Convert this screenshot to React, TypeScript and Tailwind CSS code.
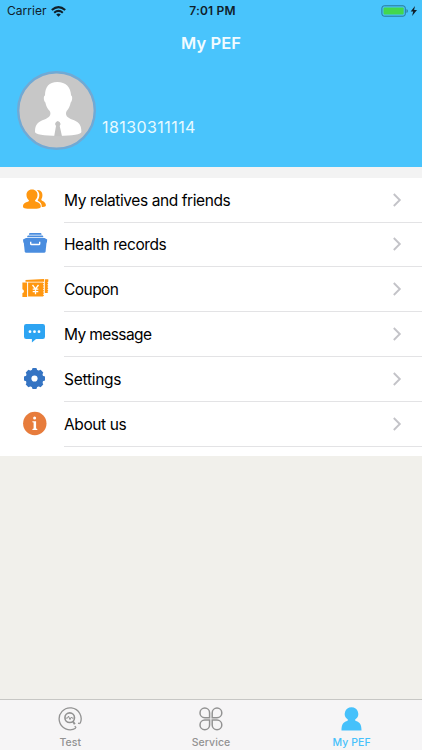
import type { ReactNode } from 'react';

const iconClass = 'ml-[21px] mt-px h-7 w-7 shrink-0';

const FriendsIcon = () => (
  <svg className={iconClass} viewBox="0 0 28 28" fill="#ff9710">
    <path d="M11 2.500C7.400 2.500 5.300 5 5.500 8.200c.1 2 .9 3.700 2.100 4.800.7.700.4 1.200-.4 1.500C4.200 15.700 2 16.500 2 19.400c0 1.600 1.500 2.400 9 2.400s8.800-.8 8.800-2.400c0-2.900-2.200-3.700-5-4.900-.8-.3-1.100-.8-.4-1.500 1.200-1.100 2-2.800 2.100-4.800C16.700 5 14.600 2.500 11 2.500z" />
    <path d="M15.800 3c5.200-.5 6.800 4.500 4.900 8.600-.6 1.100-.5 1.600.4 2.100 2.200 1 4 2.500 3.800 4.900-.1 1.100-1.200 1.400-4.100 1.300-.1-2.900-1.100-4.600-3.600-5.800-.7-.4-.6-.9 0-1.800 1.700-2.700 1.700-6.700-1.400-9.300z" />
  </svg>
);

const RecordsIcon = () => (
  <svg className={iconClass} viewBox="0 0 28 28" fill="#4a8ddf">
    <path d="M9 2.100h10.500q.8 0 1 .9v.8H8V3q.2-.9 1-.9zM7 4.500h14.500q.8 0 .9 1.800H6.100q.1-1.800.9-1.800zM2 8.500l3-1.600h18.500l2.700 1.600-.3 2.900H2.300z" />
    <path d="M2.700 11h22.900l-1 9.200q-.2 1.500-1.600 1.500H5.300q-1.400 0-1.600-1.500z" />
    <path d="M9.700 10.800v1.900q0 .8.800.8h7.400q.8 0 .8-.8v-1.900" fill="none" stroke="#fff" strokeWidth="1.400" />
  </svg>
);

const CouponIcon = () => (
  <svg className={iconClass} viewBox="0 0 28 28">
    <path d="M1.400 6.500h4.700V21H1.400v-3.800a2 2 0 0 0 0-3.900z" fill="#ff9710" />
    <path d="M4.500 5.700V4L23 3v2.700zM23.800 3.200h3.500v2.300l-1 1 1 1-1 1.200 1 1.200-1 1.200 1 1.200-1 1.200 1 1.200-1 1.200 1 1.200h-3.500z" fill="#ff9710" />
    <path d="M7.100 6.500h14.700l1.300 1L22 8.700l1.100 1.200-1.100 1.200 1.100 1.200-1.100 1.200 1.100 1.200-1.100 1.200 1.100 1.200-1.100 1.200 1.100 1.200-1.300 1H7.100z" fill="#ff9710" />
    <path d="m11.500 9 3 4 3-4M14.500 13v5.300M11.700 13.200h5.600M11.700 15.700h5.600" fill="none" stroke="#fff" strokeWidth="1.300" />
  </svg>
);

const MessageIcon = () => (
  <svg className={iconClass} viewBox="0 0 28 28">
    <path d="M5.200 3h16.600Q24 3 24 5.200v10.500q0 2.200-2.200 2.200H15l-4.100 3.500v-3.500H5.200Q3 17.900 3 15.700V5.200Q3 3 5.200 3z" fill="#2da4f2" />
    <g fill="#fff"><circle cx="9" cy="10.700" r="1.400" /><circle cx="13.500" cy="10.700" r="1.400" /><circle cx="18" cy="10.700" r="1.400" /></g>
  </svg>
);

const SettingsIcon = () => (
  <svg className={iconClass} viewBox="0 0 28 28">
    <g transform="translate(13.500 12.500)" fill="#3574c3">
      <circle r="8.900" />
      <path id="cog" d="M-2.800-8.200-1.900-10.500h3.800l.9 2.300V8.200l-.9 2.300h-3.800l-.9-2.300z" />
      <use href="#cog" transform="rotate(45)" />
      <use href="#cog" transform="rotate(90)" />
      <use href="#cog" transform="rotate(135)" />
      <circle r="3.100" fill="#fff" />
    </g>
  </svg>
);

const InfoIcon = () => (
  <svg className={iconClass} viewBox="0 0 28 28">
    <circle cx="13.800" cy="12.500" r="11.700" fill="#e77c3c" />
    <circle cx="13.600" cy="7" r="1.500" fill="#fff" />
    <path d="M11.400 10.300h3.700v7.300l1.200.4v.9h-4.900V18l1.200-.4v-6.100l-1.200-.3z" fill="#fff" />
  </svg>
);

const Row = ({ icon, label, tracking }: { icon: ReactNode; label: string; tracking: string }) => (
  <div className="flex h-[44.800px] items-center">
    {icon}
    <div className="ml-[15px] flex h-full flex-1 items-center justify-between border-b border-[#e3e3e5] pr-5">
      <span className={`pt-[2px] text-[15.500px] leading-5 text-black ${tracking}`}>{label}</span>
      <svg className="h-3.5 w-2.5" viewBox="0 0 10 14" fill="none" stroke="#c3c3c8" strokeWidth="1.900">
        <path d="m1.800 1 6 6-6 6" />
      </svg>
    </div>
  </div>
);

const Tab = ({ icon, label, active }: { icon: ReactNode; label: string; active?: boolean }) => (
  <div className={`flex flex-1 flex-col items-center pt-[7px] text-[10.500px] leading-3 font-medium tracking-[0.080px] ${active ? 'text-[#46c1fb]' : 'text-[#929292]'}`}>
    {icon}
    <span className="mt-[6px]">{label}</span>
  </div>
);

export default function App() {
  return (
    <div className="flex h-[750px] w-[422px] flex-col overflow-hidden bg-[#f1f0eb] font-['Inter','Liberation_Sans',sans-serif]">
      <header className="h-[167px] shrink-0 bg-[#49c4fc]">
        <div className="grid h-[22px] grid-cols-3 items-center pl-[7px] pr-[4px] text-[12px] text-[#10202a]">
          <div className="flex items-center gap-[5px]">
            <span className="tracking-[0.020px]">Carrier</span>
            <svg className="h-[11px] w-[15px]" viewBox="0 0 15 11" fill="none" stroke="#10202a" strokeWidth="2.100">
              <path d="M.8 4q6.700-5.700 13.400 0M3.200 6.700q4.300-3.500 8.600 0" />
              <path d="m5.200 8.400 2.300 2.300 2.300-2.300q-2.300-1.800-4.600 0z" fill="#10202a" stroke="none" />
            </svg>
          </div>
          <span className="text-center font-semibold tracking-[0.200px]">7:01 PM</span>
          <div className="flex items-center justify-end">
            <svg className="h-3 w-[37px]" viewBox="0 0 37 12">
              <rect x=".9" y=".8" width="23.400" height="10.400" rx="2.300" fill="none" stroke="#287995" />
              <rect x="2.500" y="2.400" width="20.200" height="7.200" rx="1" fill="#43d74d" />
              <path d="M25.500 4q1.300.6 1.300 2t-1.300 2z" fill="#287995" />
              <path d="m34 .9-4.300 5.700h2.500L31.100 11l4.900-6h-2.900z" fill="#10202a" />
            </svg>
          </div>
        </div>
        <h1 className="h-[42px] text-center text-[16.500px] leading-[42px] font-semibold tracking-[0.100px] text-[#f2fbff]">My PEF</h1>
        <div className="flex pl-[17px] pt-[7px]">
          <svg className="h-[80px] w-[80px]" viewBox="0 0 80 80">
            <circle cx="39.500" cy="39.500" r="38.300" fill="#c7c7c7" stroke="#71a9d4" strokeWidth="2.400" />
            <path d="M40.300 11C31.800 11 28.200 15.800 28 24.500c-1.700.1-1.500 5.500.4 7C29 35 30.500 37.700 32.700 40c2 3.800-.3 6.500-5.200 8.500C21.500 50.700 18 52.500 18 61c0 2.200 8.500 3.900 23.200 3.900S64.400 63.200 64.400 61C64.400 52.500 61 50.700 55 48.500c-5-2-7.300-4.700-5.300-8.500 2-2.300 3.300-5 4-8.500 1.800-1.500 2-6.900.4-7C53.700 15.800 48.800 11 40.300 11z" fill="#fff" />
            <path d="m39 51 1.800-1.100 1.800 1.100 1 1.900-.9 2.100 2.300 10.200h-7.800L39 55l-1-2.100z" fill="#c2c2c2" />
          </svg>
          <span className="ml-[5px] mt-[46px] text-[16px] leading-5 tracking-[0.430px] text-[#e7faff]">18130311114</span>
        </div>
      </header>
      <div className="h-[10.800px] shrink-0 bg-[#f3f3f3]" />
      <main className="shrink-0 bg-white pb-[9.700px]">
        <Row icon={<FriendsIcon />} label="My relatives and friends" tracking="tracking-[-0.410px]" />
        <Row icon={<RecordsIcon />} label="Health records" tracking="tracking-[-0.400px]" />
        <Row icon={<CouponIcon />} label="Coupon" tracking="tracking-[-0.550px]" />
        <Row icon={<MessageIcon />} label="My message" tracking="tracking-[-0.600px]" />
        <Row icon={<SettingsIcon />} label="Settings" tracking="tracking-[-0.260px]" />
        <Row icon={<InfoIcon />} label="About us" tracking="tracking-[-0.400px]" />
      </main>
      <div className="flex-1" />
      <nav className="flex h-[51px] shrink-0 border-t border-[#c7c7c4] bg-[#f6f5f6]">
        <Tab label="Test" icon={
          <svg className="h-6 w-6" viewBox="0 0 24 24" fill="none" stroke="#929292" strokeWidth="1.300">
            <path d="M17.700 21.300A11 11 0 1 1 22.100 16.500M18.200 20.800l-1.500-1.600M21.800 16.700l-1.700-.6" />
            <circle cx="11.700" cy="10.700" r="4.800" strokeWidth="1.600" />
            <path d="m14.800 14.200 2 3" strokeWidth="2" />
            <path d="M7.500 11.100h2l1-2 1.500 3.500 1.400-2.600.6 1.100h1.500" strokeWidth="1" />
          </svg>
        } />
        <Tab label="Service" icon={
          <svg className="h-6 w-6" viewBox="0 0 24 24" fill="none" stroke="#929292" strokeWidth="1.500">
            <path d="M10.600 10.700H5.800a4.800 4.800 0 1 1 4.800-4.800zM13.200 10.700V5.900a4.800 4.800 0 1 1 4.800 4.800zM10.600 13.100v4.800a4.800 4.800 0 1 1-4.800-4.800zM13.200 13.100H18a4.800 4.800 0 1 1-4.800 4.800z" />
          </svg>
        } />
        <Tab active label="My PEF" icon={
          <svg className="h-6 w-6" viewBox="0 0 24 24" fill="#46c1fb">
            <path d="M11.500.2a6.700 6.700 0 0 1 4 12.100c-.9.700-.5 1.300.5 1.600 4 1.300 5.500 3.700 5.500 9.500h-20c0-5.800 1.500-8.200 5.500-9.500 1-.3 1.400-.9.500-1.600A6.700 6.700 0 0 1 11.500.2z" />
          </svg>
        } />
      </nav>
    </div>
  );
}
